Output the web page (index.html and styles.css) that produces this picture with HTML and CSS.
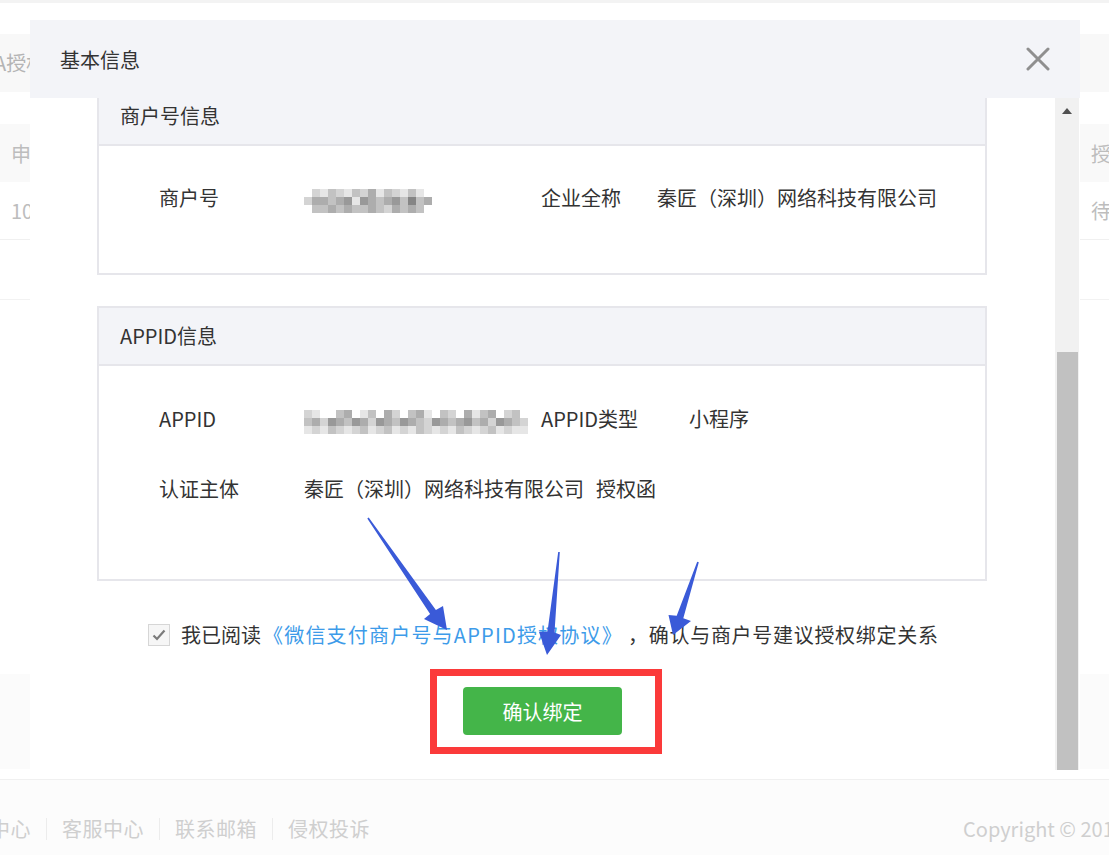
FILE: index.html
```html
<!DOCTYPE html>
<html lang="zh-CN">
<head>
<meta charset="utf-8">
<title>基本信息</title>
<link rel="stylesheet" href="styles.css">
</head>
<body>
<div class="page">
  <div class="topbar"></div>
  <div class="tabs"><span class="tab-text">A授权管理</span></div>
  <div class="table">
    <div class="trow thead"><span class="cell-first">申请时间</span><span class="cell-last">授权状态</span></div>
    <div class="trow tbody"><span class="cell-first">1000000001</span><span class="cell-last">待授权</span></div>
  </div>
  <div class="table-foot"></div>
  <div class="actionbar"></div>
  <div class="footer">
    <div class="footer-links">
      <span class="flink">帮助中心</span><span class="fsep"></span>
      <span class="flink">客服中心</span><span class="fsep"></span>
      <span class="flink">联系邮箱</span><span class="fsep"></span>
      <span class="flink">侵权投诉</span>
    </div>
    <div class="copyright">Copyright © 2019-2024 All Rights Reserved</div>
  </div>
</div>

<div class="modal">
  <div class="modal-header">
    <span class="modal-title">基本信息</span>
    <svg class="close" width="24" height="24" viewBox="0 0 24 24"><path d="M2 2 L22 22 M22 2 L2 22" stroke="#8f8f8f" stroke-width="3" stroke-linecap="round" fill="none"/></svg>
  </div>
  <div class="modal-body">
    <div class="scroll-area">
      <div class="scroll-content">
        <div class="card">
          <div class="card-head">商户号信息</div>
          <div class="card-body card-body-1">
            <div class="row">
              <span class="lbl">商户号</span>
              <span class="val val-w237">
                <span class="mosaic mosaic-16">
                  <i></i><i class="b"></i><i class="a"></i><i class="c"></i><i class="b"></i><i class="a"></i><i class="c"></i><i class="b"></i><i class="d"></i><i class="a"></i><i class="c"></i><i class="b"></i><i class="a"></i><i class="c"></i><i class="a"></i><i></i>
                  <i class="b"></i><i class="d"></i><i class="d"></i><i class="c"></i><i class="d"></i><i class="e"></i><i class="a"></i><i class="e"></i><i class="d"></i><i class="c"></i><i class="d"></i><i class="e"></i><i class="c"></i><i class="f"></i><i class="c"></i><i class="d"></i>
                  <i></i><i class="c"></i><i class="c"></i><i class="d"></i><i class="c"></i><i class="d"></i><i class="c"></i><i class="c"></i><i class="d"></i><i class="c"></i><i class="b"></i><i class="d"></i><i class="c"></i><i class="d"></i><i class="c"></i><i></i>
                </span>
              </span>
              <span class="lbl2 lbl2-w116">企业全称</span>
              <span class="val">秦匠（深圳）网络科技有限公司</span>
            </div>
          </div>
        </div>

        <div class="card card-2">
          <div class="card-head">APPID信息</div>
          <div class="card-body card-body-2">
            <div class="row">
              <span class="lbl">APPID</span>
              <span class="val val-w237">
                <span class="mosaic mosaic-28">
                  <i class="b"></i><i class="a"></i><i></i><i></i><i class="c"></i><i class="d"></i><i></i><i class="a"></i><i class="c"></i><i></i><i class="d"></i><i class="b"></i><i></i><i class="c"></i><i class="d"></i><i class="a"></i><i></i><i class="c"></i><i class="b"></i><i></i><i class="d"></i><i class="a"></i><i class="c"></i><i class="d"></i><i></i><i class="b"></i><i class="c"></i><i></i>
                  <i class="c"></i><i class="d"></i><i class="b"></i><i class="e"></i><i class="d"></i><i class="c"></i><i class="e"></i><i class="d"></i><i class="b"></i><i class="e"></i><i class="d"></i><i class="c"></i><i class="e"></i><i class="d"></i><i class="c"></i><i class="b"></i><i class="e"></i><i class="d"></i><i class="c"></i><i class="d"></i><i class="e"></i><i class="c"></i><i class="d"></i><i class="b"></i><i class="e"></i><i class="d"></i><i class="c"></i><i class="b"></i>
                  <i class="a"></i><i class="b"></i><i class="a"></i><i class="c"></i><i class="b"></i><i class="a"></i><i class="b"></i><i class="c"></i><i class="a"></i><i class="b"></i><i class="c"></i><i class="a"></i><i class="b"></i><i class="a"></i><i class="c"></i><i class="b"></i><i class="a"></i><i class="b"></i><i class="a"></i><i class="c"></i><i class="b"></i><i class="a"></i><i class="b"></i><i class="c"></i><i class="a"></i><i class="b"></i><i class="a"></i><i class="a"></i>
                </span>
              </span>
              <span class="lbl2 lbl2-w148">APPID类型</span>
              <span class="val">小程序</span>
            </div>
            <div class="row">
              <span class="lbl">认证主体</span>
              <span class="val">秦匠（深圳）网络科技有限公司<span class="attach">授权函</span></span>
            </div>
          </div>
        </div>

        <div class="agree">
          <span class="checkbox"><svg width="14" height="12" viewBox="0 0 14 12"><path d="M1.5 6.5 L5 10 L12.5 1.5" stroke="#7b7b7b" stroke-width="2.2" fill="none"/></svg></span>
          <span class="agree-text">我已阅读<a class="agree-link">《微信支付商户号与APPID授权协议》</a><span class="agree-rest"> ，确认与商户号建议授权绑定关系</span></span>
        </div>
        <div class="btn-row">
          <button class="btn-confirm">确认绑定</button>
        </div>
      </div>
    </div>
    <div class="scrollbar">
      <div class="sb-arrow"></div>
      <div class="sb-thumb"></div>
    </div>
  </div>
</div>

<svg class="annotations" width="1109" height="855" viewBox="0 0 1109 855">
  <rect x="433.5" y="672.5" width="225" height="78" fill="none" stroke="#fb3a3a" stroke-width="7"/>
  <polygon fill="#3a5ad8" points="367.3,518.5 430.1,614 424,619 447,630 443,606 435.9,610 368.7,517.5"/>
  <polygon fill="#3a5ad8" points="558.2,551.9 547.5,631.6 539,632 547,655 561,635 554.5,632.4 559.8,552.1"/>
  <polygon fill="#3a5ad8" points="697.2,561.7 676.7,615.8 668.5,615 673,635 691,621 683.3,618.2 698.8,562.3"/>
</svg>
</body>
</html>
```

FILE: styles.css
```css
* { box-sizing: border-box; }
html, body { margin: 0; padding: 0; }
body {
  width: 1109px;
  height: 855px;
  overflow: hidden;
  position: relative;
  background: #fff;
  font-family: "Noto Sans CJK SC", "Microsoft YaHei", "Noto Sans", sans-serif;
  font-size: 20px;
  color: #333;
}

/* background page */
.page { width: 1109px; height: 855px; display: flex; flex-direction: column; }
.topbar { height: 3px; background: #f3f3f3; flex: none; }
.tabs {
  margin-top: 31px;
  height: 58px;
  background: #f8f8f8;
  line-height: 58px;
  color: #b4b4b4;
  white-space: nowrap;
  overflow: hidden;
  flex: none;
}
.tab-text { margin-left: -6px; }
.table { margin-top: 32px; flex: none; }
.trow {
  height: 58px;
  display: flex;
  align-items: center;
  padding-left: 11px;
  color: #bdbdbd;
  white-space: nowrap;
  overflow: hidden;
}
.thead { background: #f9f9f9; }
.tbody { border-bottom: 1px solid #f0f0f0; }
.cell-first { flex: 1; }
.cell-last { width: 18px; overflow: visible; }
.table-foot { height: 60px; border-bottom: 1px solid #f2f2f2; flex: none; }
.actionbar { margin-top: 374px; height: 95px; background: #fbfbfb; flex: none; }
.footer {
  margin-top: 10px;
  flex: 1;
  border-top: 1px solid #f0f0f0;
  background: #fcfcfc;
  display: flex;
  align-items: flex-start;
  padding-top: 34px;
  white-space: nowrap;
  overflow: hidden;
  color: #cfcfcf;
  line-height: 30px;
}
.footer-links { display: flex; align-items: center; margin-left: -51px; flex: none; }
.flink { letter-spacing: 0.5px; }
.fsep { width: 1px; height: 22px; background: #ececec; margin: 0 15px; }
.copyright { margin-left: auto; width: 146px; flex: none; overflow: visible; }

/* modal */
.modal {
  position: absolute;
  left: 30px;
  top: 20px;
  width: 1050px;
  height: 750px;
  background: #fff;
  display: flex;
  flex-direction: column;
}
.modal-header {
  height: 78px;
  flex: none;
  background: #f3f4f8;
  display: flex;
  align-items: center;
  justify-content: space-between;
  padding: 0 30px;
}
.modal-title { color: #333; font-size: 20px; }
.close { display: block; margin-top: -1px; }
.modal-body { flex: 1; display: flex; min-height: 0; }
.scroll-area { flex: 1; overflow: hidden; }
.scroll-content { margin-top: -12px; padding: 0 68px 0 67px; }

.card { border: 2px solid #e6e6eb; }
.card-2 { margin-top: 31px; }
.card-head {
  height: 58px;
  line-height: 56px;
  background: #f3f4f8;
  border-bottom: 2px solid #e6e6eb;
  padding-left: 21px;
  color: #333;
}
.card-body { padding-left: 60px; }
.card-body-1 { padding-top: 37px; padding-bottom: 20px; }
.card-body-2 { padding-top: 38px; padding-bottom: 35px; }
.row {
  display: flex;
  align-items: center;
  height: 30px;
  line-height: 30px;
  margin-bottom: 40px;
  white-space: nowrap;
}
.lbl { width: 145px; flex: none; }
.val { flex: none; }
.val-w237 { width: 237px; }
.lbl2 { flex: none; }
.lbl2-w116 { width: 116px; }
.lbl2-w148 { width: 148px; }
.attach { margin-left: 12px; }

.mosaic { display: inline-grid; grid-auto-rows: 8px; vertical-align: middle; }
.mosaic-16 { grid-template-columns: repeat(16, 8px); }
.mosaic-28 { grid-template-columns: repeat(28, 8px); }
.mosaic i { display: block; width: 8px; height: 8px; background: transparent; }
.mosaic i.a { background: #e6e6e6; }
.mosaic i.b { background: #d4d4d4; }
.mosaic i.c { background: #c2c2c2; }
.mosaic i.d { background: #adadad; }
.mosaic i.e { background: #999999; }
.mosaic i.f { background: #858585; }

.agree {
  margin-top: 39px;
  padding-left: 51px;
  display: flex;
  align-items: center;
  height: 30px;
  white-space: nowrap;
}
.checkbox {
  width: 22px;
  height: 22px;
  border: 1px solid #d6d6d6;
  background: #f6f6f6;
  display: flex;
  align-items: center;
  justify-content: center;
  margin-right: 11px;
  flex: none;
}
.agree-text { color: #333; line-height: 30px; }
.agree-link { color: #3d9be9; text-decoration: none; letter-spacing: 1.2px; margin-left: 2px; }
.agree-rest { letter-spacing: 0.7px; }
.btn-row { display: flex; justify-content: center; margin-top: 37px; padding-left: 1px; }
.btn-confirm {
  width: 159px;
  height: 48px;
  border: none;
  border-radius: 4px;
  background: #44b549;
  color: #fff;
  font-family: inherit;
  font-size: 20px;
  padding: 0;
}

.scrollbar {
  width: 24px;
  margin-right: 1px;
  background: #f1f1f1;
  display: flex;
  flex-direction: column;
  align-items: center;
  flex: none;
}
.sb-arrow {
  margin-top: 10px;
  width: 0;
  height: 0;
  border-left: 5.5px solid transparent;
  border-right: 5.5px solid transparent;
  border-bottom: 6px solid #505050;
}
.sb-thumb {
  margin-top: auto;
  width: 21px;
  height: 418px;
  background: #c1c1c1;
}

.annotations { position: absolute; left: 0; top: 0; pointer-events: none; }
```
